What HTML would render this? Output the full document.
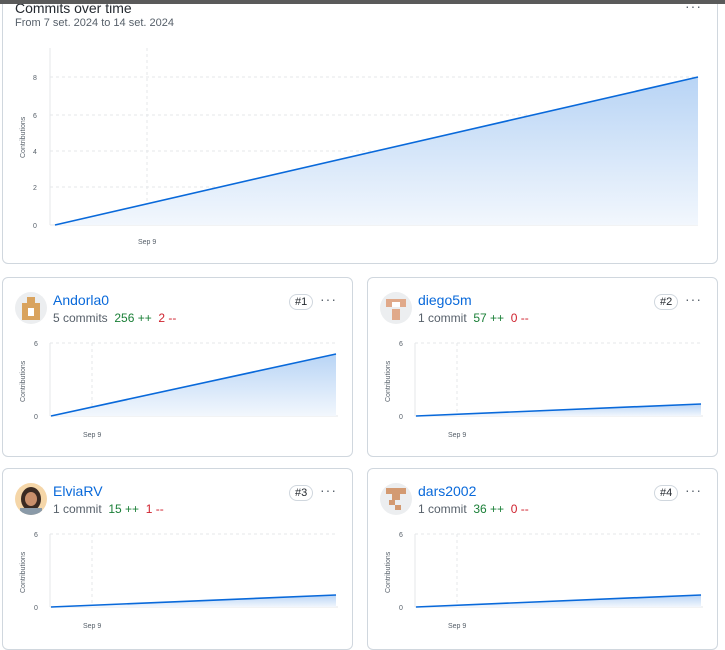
<!DOCTYPE html>
<html><head><style>
body{margin:0;width:725px;height:642px;overflow:hidden;background:#fff;font-family:"Liberation Sans",sans-serif;position:relative}
.top{position:absolute;left:0;top:0;width:725px;height:4px;background:#5a5a5a;z-index:5}
.card{position:absolute;border:1px solid #d0d7de;border-radius:6px;background:#fff}
.t{position:absolute;white-space:nowrap}
.name{color:#0969da;font-size:14px}
.sub{color:#57606a;font-size:12px}
.g{color:#1a7f37}.r{color:#cf222e}
.badge{position:absolute;border:1px solid #d0d7de;border-radius:10px;font-size:11px;color:#24292f;padding:1px 5px;background:#fff}
.dots{position:absolute;font-size:14px;color:#57606a;letter-spacing:1px}
.av{position:absolute;width:32px;height:32px;border-radius:50%;background:#eceef0;overflow:hidden}
svg{position:absolute;left:0;top:0}
</style></head><body>
<div class="top"></div>
<div class="card" style="left:2px;top:-6px;width:714px;height:268px"></div>
<div class="t" style="left:15px;top:0px;font-size:14px;color:#24292f">Commits over time</div>
<div class="t sub" style="left:15px;top:17px;font-size:11px">From 7 set. 2024 to 14 set. 2024</div>
<div class="dots" style="left:685px;top:-2px">···</div>
<svg width="725" height="642" style="font-family:'Liberation Sans',sans-serif;font-size:7px;fill:#57606a">
<defs><linearGradient id="gr" x1="0" y1="0" x2="0" y2="1"><stop offset="0" stop-color="#b8d4f5"/><stop offset="1" stop-color="#f2f7fd"/></linearGradient></defs>
<g stroke="#e4e7ea" stroke-dasharray="3,3" stroke-width="1">
<line x1="50" y1="77" x2="698" y2="77"/><line x1="50" y1="115" x2="698" y2="115"/><line x1="50" y1="151" x2="698" y2="151"/><line x1="50" y1="187" x2="698" y2="187"/><line x1="147" y1="48" x2="147" y2="225"/>
</g>
<line x1="50" y1="48" x2="50" y2="225" stroke="#e4e7ea"/>
<line x1="50" y1="225" x2="698" y2="225" stroke="#e4e7ea"/>
<polygon points="55,225 698,77 698,225" fill="url(#gr)"/>
<line x1="55" y1="225" x2="698" y2="77" stroke="#0969da" stroke-width="1.6"/>
<text x="33" y="80">8</text><text x="33" y="118">6</text><text x="33" y="154">4</text><text x="33" y="190">2</text><text x="33" y="228">0</text>
<text x="138" y="244">Sep 9</text>
<text transform="translate(25,158) rotate(-90)">Contributions</text>
</svg>

<div class="card" style="left:2px;top:277px;width:349px;height:178px"></div>
<div class="card" style="left:367px;top:277px;width:349px;height:178px"></div>
<div class="card" style="left:2px;top:468px;width:349px;height:180px"></div>
<div class="card" style="left:367px;top:468px;width:349px;height:180px"></div>

<div class="av" style="left:15px;top:292px"><div style="position:absolute;left:12px;top:5px;width:8px;height:6px;background:#d9a35e"></div><div style="position:absolute;left:7px;top:11px;width:18px;height:17px;background:#d9a35e"></div><div style="position:absolute;left:13px;top:16px;width:6px;height:8px;background:#fff"></div></div>
<div class="av" style="left:380px;top:292px"><div style="position:absolute;left:6px;top:7px;width:20px;height:8px;background:#e0a98a"></div><div style="position:absolute;left:12px;top:10px;width:8px;height:5px;background:#fff"></div><div style="position:absolute;left:12px;top:17px;width:8px;height:11px;background:#e0a98a"></div></div>
<div class="av" style="left:15px;top:483px;background:#f5d6a8"><div style="position:absolute;left:6px;top:4px;width:20px;height:24px;border-radius:50%;background:#3a2a22"></div><div style="position:absolute;left:10px;top:9px;width:12px;height:14px;border-radius:50%;background:#c98f6b"></div><div style="position:absolute;left:5px;top:25px;width:22px;height:8px;background:#8a9aa8"></div></div>
<div class="av" style="left:380px;top:483px"><div style="position:absolute;left:6px;top:5px;width:20px;height:6px;background:#d39a72"></div><div style="position:absolute;left:12px;top:11px;width:8px;height:6px;background:#d39a72"></div><div style="position:absolute;left:9px;top:17px;width:6px;height:5px;background:#d39a72"></div><div style="position:absolute;left:15px;top:22px;width:6px;height:5px;background:#d39a72"></div></div>

<div class="t name" style="left:53px;top:292px">Andorla0</div>
<div class="t sub" style="left:53px;top:311px">5 commits &nbsp;<span class="g">256 ++</span>&nbsp; <span class="r">2 --</span></div>
<div class="badge" style="left:289px;top:294px">#1</div><div class="dots" style="left:320px;top:291px">···</div>

<div class="t name" style="left:418px;top:292px">diego5m</div>
<div class="t sub" style="left:418px;top:311px">1 commit &nbsp;<span class="g">57 ++</span>&nbsp; <span class="r">0 --</span></div>
<div class="badge" style="left:654px;top:294px">#2</div><div class="dots" style="left:685px;top:291px">···</div>

<div class="t name" style="left:53px;top:483px">ElviaRV</div>
<div class="t sub" style="left:53px;top:502px">1 commit &nbsp;<span class="g">15 ++</span>&nbsp; <span class="r">1 --</span></div>
<div class="badge" style="left:289px;top:485px">#3</div><div class="dots" style="left:320px;top:482px">···</div>

<div class="t name" style="left:418px;top:483px">dars2002</div>
<div class="t sub" style="left:418px;top:502px">1 commit &nbsp;<span class="g">36 ++</span>&nbsp; <span class="r">0 --</span></div>
<div class="badge" style="left:654px;top:485px">#4</div><div class="dots" style="left:685px;top:482px">···</div>

<svg width="725" height="642" style="font-family:'Liberation Sans',sans-serif;font-size:7px;fill:#57606a">
<defs><linearGradient id="g2" x1="0" y1="0" x2="0" y2="1"><stop offset="0" stop-color="#b8d4f5"/><stop offset="1" stop-color="#f2f7fd"/></linearGradient></defs>
<g id="c1">
<line x1="50" y1="343" x2="338" y2="343" stroke="#e4e7ea" stroke-dasharray="3,3"/>
<line x1="92" y1="343" x2="92" y2="416" stroke="#e4e7ea" stroke-dasharray="3,3"/>
<line x1="50" y1="343" x2="50" y2="416" stroke="#e4e7ea"/>
<line x1="50" y1="416" x2="338" y2="416" stroke="#e4e7ea"/>
<text x="34" y="346">6</text><text x="34" y="419">0</text><text x="83" y="437">Sep 9</text>
<text transform="translate(25,402) rotate(-90)">Contributions</text>
</g>
<polygon points="51,416 336,354 336,416" fill="url(#g2)"/>
<line x1="51" y1="416" x2="336" y2="354" stroke="#0969da" stroke-width="1.6"/>
<use href="#c1" x="365" y="0"/>
<polygon points="416,416 701,404 701,416" fill="url(#g2)"/>
<line x1="416" y1="416" x2="701" y2="404" stroke="#0969da" stroke-width="1.6"/>
<use href="#c1" x="0" y="191"/>
<polygon points="51,607 336,595 336,607" fill="url(#g2)"/>
<line x1="51" y1="607" x2="336" y2="595" stroke="#0969da" stroke-width="1.6"/>
<use href="#c1" x="365" y="191"/>
<polygon points="416,607 701,595 701,607" fill="url(#g2)"/>
<line x1="416" y1="607" x2="701" y2="595" stroke="#0969da" stroke-width="1.6"/>
</svg>
</body></html>
